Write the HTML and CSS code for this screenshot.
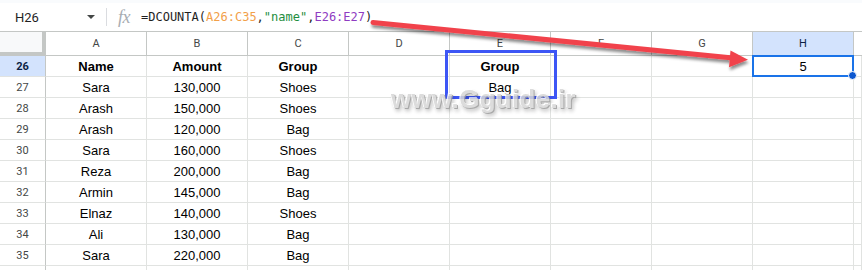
FILE: index.html
```html
<!DOCTYPE html>
<html>
<head>
<meta charset="utf-8">
<link rel="stylesheet" href="styles.css">
</head>
<body>
<div class="edge"></div>
<div class="fbar">
  <div class="namebox"><span class="ref">H26</span><span class="caret"></span></div>
  <div class="sep"></div>
  <span class="fx">fx</span>
  <div class="formula">=DCOUNTA(<span class="r1">A26:C35</span>,<span class="str">"name"</span>,<span class="r2">E26:E27</span>)</div>
</div>
<div class="sheet">
  <div class="corner"></div>
  <div class="ch">A</div><div class="ch">B</div><div class="ch">C</div><div class="ch">D</div>
  <div class="ch">E</div><div class="ch">F</div><div class="ch">G</div><div class="ch sel">H</div><div class="ch rest"></div>

  <div class="rh sel">26</div>
  <div class="c b">Name</div><div class="c b">Amount</div><div class="c b">Group</div><div class="c"></div>
  <div class="c b">Group</div><div class="c"></div><div class="c"></div><div class="c active">5</div><div class="c"></div>

  <div class="rh">27</div>
  <div class="c">Sara</div><div class="c">130,000</div><div class="c">Shoes</div><div class="c"></div>
  <div class="c">Bag</div><div class="c"></div><div class="c"></div><div class="c"></div><div class="c"></div>

  <div class="rh">28</div>
  <div class="c">Arash</div><div class="c">150,000</div><div class="c">Shoes</div><div class="c"></div>
  <div class="c"></div><div class="c"></div><div class="c"></div><div class="c"></div><div class="c"></div>

  <div class="rh">29</div>
  <div class="c">Arash</div><div class="c">120,000</div><div class="c">Bag</div><div class="c"></div>
  <div class="c"></div><div class="c"></div><div class="c"></div><div class="c"></div><div class="c"></div>

  <div class="rh">30</div>
  <div class="c">Sara</div><div class="c">160,000</div><div class="c">Shoes</div><div class="c"></div>
  <div class="c"></div><div class="c"></div><div class="c"></div><div class="c"></div><div class="c"></div>

  <div class="rh">31</div>
  <div class="c">Reza</div><div class="c">200,000</div><div class="c">Bag</div><div class="c"></div>
  <div class="c"></div><div class="c"></div><div class="c"></div><div class="c"></div><div class="c"></div>

  <div class="rh">32</div>
  <div class="c">Armin</div><div class="c">145,000</div><div class="c">Bag</div><div class="c"></div>
  <div class="c"></div><div class="c"></div><div class="c"></div><div class="c"></div><div class="c"></div>

  <div class="rh">33</div>
  <div class="c">Elnaz</div><div class="c">140,000</div><div class="c">Shoes</div><div class="c"></div>
  <div class="c"></div><div class="c"></div><div class="c"></div><div class="c"></div><div class="c"></div>

  <div class="rh">34</div>
  <div class="c">Ali</div><div class="c">130,000</div><div class="c">Bag</div><div class="c"></div>
  <div class="c"></div><div class="c"></div><div class="c"></div><div class="c"></div><div class="c"></div>

  <div class="rh">35</div>
  <div class="c">Sara</div><div class="c">220,000</div><div class="c">Bag</div><div class="c"></div>
  <div class="c"></div><div class="c"></div><div class="c"></div><div class="c"></div><div class="c"></div>

  <div class="rh last"></div>
  <div class="c last"></div><div class="c last"></div><div class="c last"></div><div class="c last"></div>
  <div class="c last"></div><div class="c last"></div><div class="c last"></div><div class="c last"></div><div class="c last"></div>
</div>

<div class="criteria-box"></div>
<div class="watermark">www.Gguide.ir</div>
<svg class="arrow" width="862" height="270" viewBox="0 0 862 270">
  <defs>
    <filter id="sh" x="-10%" y="-50%" width="120%" height="300%">
      <feDropShadow dx="1" dy="3" stdDeviation="1.6" flood-color="#000" flood-opacity="0.45"/>
    </filter>
  </defs>
  <g filter="url(#sh)">
    <line x1="373" y1="22.5" x2="733" y2="58" stroke="#f1434b" stroke-width="5" stroke-linecap="round"/>
    <polygon points="748,59.8 730.5,50.6 729,67.2" fill="#f1434b"/>
  </g>
</svg>
</body>
</html>
```
FILE: styles.css
```css
* { box-sizing: border-box; }
html, body { margin: 0; padding: 0; background: #fff; overflow: hidden; }
body {
  width: 862px;
  height: 270px;
  position: relative;
  font-family: "Liberation Sans", Arial, sans-serif;
}
.edge { height: 3px; background: #f9fbfd; }
.fbar {
  height: 29px;
  display: flex;
  align-items: center;
  border-bottom: 1px solid #c4c7c5;
  background: #fff;
}
.namebox {
  width: 106px;
  display: flex;
  align-items: center;
  padding-left: 15px;
  padding-right: 11px;
}
.ref {
  font-family: Roboto, "Liberation Sans", sans-serif;
  font-size: 13px;
  color: #1f1f1f;
  flex: 1;
}
.caret {
  width: 0; height: 0;
  border-left: 4px solid transparent;
  border-right: 4px solid transparent;
  border-top: 4px solid #444746;
}
.sep { width: 1px; height: 18px; background: #dadce0; }
.fx {
  font-family: "Liberation Serif", serif;
  font-style: italic;
  font-size: 18px;
  color: #a8adb2;
  margin-left: 11px;
  margin-right: 10px;
  letter-spacing: -0.5px;
}
.formula {
  font-family: "DejaVu Sans Mono", "Liberation Mono", monospace;
  font-size: 12px;
  color: #1f1f1f;
  padding-left: 1px;
}
.r1 { color: #f2a04a; }
.str { color: #1e8e3e; }
.r2 { color: #8f3cc2; }

.sheet {
  display: grid;
  grid-template-columns: 46px repeat(8, 101px) 1fr;
  grid-template-rows: 24px repeat(10, 21px) 6px;
}
.corner {
  background: #f8f9fa;
  border-right: 4px solid #c4c7c5;
  border-bottom: 4px solid #c4c7c5;
}
.ch {
  display: flex;
  align-items: center;
  justify-content: center;
  font-family: Roboto, "Liberation Sans", sans-serif;
  font-size: 11px;
  color: #444746;
  border-right: 1px solid #c4c7c5;
  border-bottom: 1px solid #c4c7c5;
  background: #fff;
}
.ch.sel { background: #d3e3fd; color: #0b1f44; }
.ch.rest { border-right: none; }
.rh {
  display: flex;
  align-items: center;
  justify-content: center;
  font-family: Roboto, "Liberation Sans", sans-serif;
  font-size: 11px;
  color: #444746;
  border-right: 1px solid #c4c7c5;
  border-bottom: 1px solid #e1e3e1;
  background: #fff;
}
.rh.sel { background: #d3e3fd; color: #0b1f44; font-weight: bold; }
.c {
  display: flex;
  align-items: center;
  justify-content: center;
  font-size: 13px;
  color: #000;
  border-right: 1px solid #e1e3e1;
  border-bottom: 1px solid #e1e3e1;
  white-space: nowrap;
}
.last { border-bottom: none; }
.c.b { font-weight: bold; }
.c.active { position: relative; }
.c.active::after {
  content: "";
  position: absolute;
  left: -1px; top: -1px; right: -1px; bottom: -1px;
  border: 2px solid #1a73e8;
}
.c.active::before {
  content: "";
  position: absolute;
  right: -4px; bottom: -4px;
  width: 7px; height: 7px;
  border-radius: 50%;
  background: #0b57d0;
  border: 1px solid #fff;
  z-index: 2;
}
.criteria-box {
  position: absolute;
  left: 445px;
  top: 50px;
  width: 112px;
  height: 49px;
  border: 3px solid #3d56f5;
}
.watermark {
  position: absolute;
  left: 391px;
  top: 84px;
  font-family: "Liberation Sans", Arial, sans-serif;
  font-weight: bold;
  font-size: 26px;
  color: #d6d6d6;
  letter-spacing: 0.3px;
  text-shadow: -1px -1px 0 #fff, 1px 1px 0 #9a9a9a, 2px 3px 4px rgba(0,0,0,0.35);
  opacity: 0.85;
}
.arrow { position: absolute; left: 0; top: 0; pointer-events: none; }
```
